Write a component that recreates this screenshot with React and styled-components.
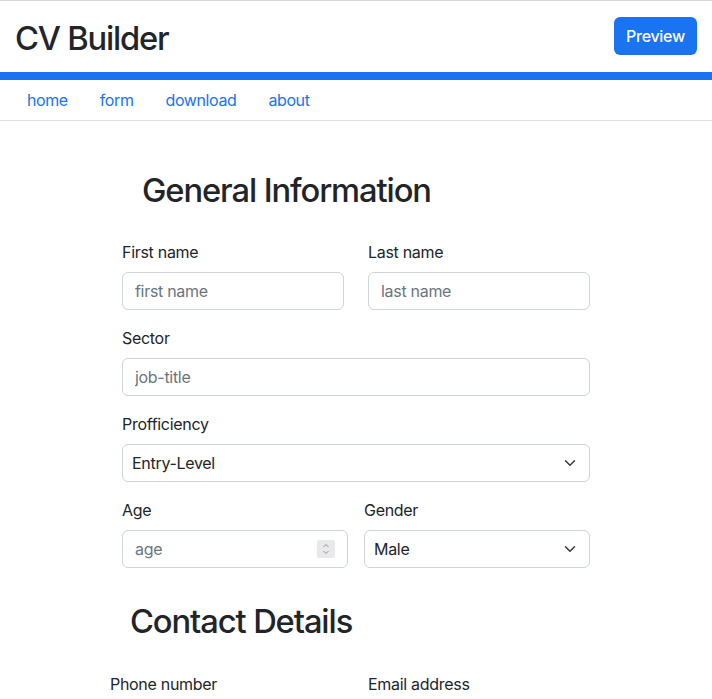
import React from 'react';
import styled, { createGlobalStyle } from 'styled-components';

const GlobalStyle = createGlobalStyle`
  body {
    margin: 0;
    background: #fff;
    color: #212529;
    font-family: Inter, "Noto Sans", sans-serif;
    font-size: 16px;
    line-height: 1.5;
  }
  * { box-sizing: border-box; }
`;

const Chevron = () => (
  <svg width='12' height='12' viewBox='0 0 16 16'>
    <path d='M2 5l6 6 6-6' fill='none' stroke='#343a40' strokeWidth='2' strokeLinecap='round' strokeLinejoin='round' />
  </svg>
);

const App = () => {
  return (
    <>
      <GlobalStyle />
      <Header>
        <Title>CV Builder</Title>
        <PreviewButton>Preview</PreviewButton>
      </Header>
      <Nav>
        <NavLink href='#'>home</NavLink>
        <NavLink href='#'>form</NavLink>
        <NavLink href='#'>download</NavLink>
        <NavLink href='#'>about</NavLink>
      </Nav>

      <FormWrap>
        <SectionTitle $indent={20}>General Information</SectionTitle>
        <Row $gap={24}>
          <Field>
            <Label>First name</Label>
            <Input placeholder='first name' />
          </Field>
          <Field>
            <Label>Last name</Label>
            <Input placeholder='last name' />
          </Field>
        </Row>
        <Field>
          <Label>Sector</Label>
          <Input placeholder='job-title' />
        </Field>
        <Field>
          <Label>Profficiency</Label>
          <SelectBox>
            <Select defaultValue='entry'>
              <option value='entry'>Entry-Level</option>
              <option value='mid'>Mid-Level</option>
              <option value='senior'>Senior</option>
            </Select>
            <Arrow><Chevron /></Arrow>
          </SelectBox>
        </Field>
        <Row $gap={16}>
          <Field>
            <Label>Age</Label>
            <SelectBox>
              <Input placeholder='age' />
              <Spinner>
                <svg width='8' height='14' viewBox='0 0 8 14'>
                  <path d='M1.5 5L4 2.5 6.5 5M1.5 9L4 11.5 6.5 9' fill='none' stroke='#8a8f94' strokeWidth='1' />
                </svg>
              </Spinner>
            </SelectBox>
          </Field>
          <Field>
            <Label>Gender</Label>
            <SelectBox>
              <Select defaultValue='male'>
                <option value='male'>Male</option>
                <option value='female'>Female</option>
              </Select>
              <Arrow><Chevron /></Arrow>
            </SelectBox>
          </Field>
        </Row>

        <SectionTitle $indent={8} $top={18} $bottom={15}>Contact Details</SectionTitle>
        <ContactRow>
          <Label>Phone number</Label>
          <Label>Email address</Label>
        </ContactRow>
      </FormWrap>
    </>
  );
};

const Header = styled.header`
  display: flex;
  align-items: center;
  justify-content: space-between;
  height: 80px;
  padding: 0 15px;
  border-top: 1px solid #d6d6d6;
  border-bottom: 8px solid #1a73f0;
`;

const Title = styled.h1`
  margin: 4px 0 0;
  font-size: 32.7px;
  font-weight: 500;
  line-height: 1.2;
  letter-spacing: -1.2px;
  color: #212529;
`;

const PreviewButton = styled.button`
  height: 38px;
  width: 83px;
  margin: 0 0 2px;
  border: none;
  border-radius: 6px;
  background: #1a73f0;
  color: #fff;
  font-family: inherit;
  font-size: 16px;
  font-weight: 500;
  letter-spacing: -0.3px;
`;

const Nav = styled.nav`
  display: flex;
  padding: 0 11px;
  border-bottom: 1px solid #dee2e6;
`;

const NavLink = styled.a`
  padding: 8px 16px;
  color: #1a73f0;
  text-decoration: none;
  font-size: 16px;
  line-height: 24px;
  letter-spacing: -0.4px;
`;

const FormWrap = styled.main`
  width: 468px;
  margin: 0 auto;
  padding-top: 50px;
  display: flex;
  flex-direction: column;
  gap: 16px;
`;

const SectionTitle = styled.h2`
  margin: ${p => p.$top || 0}px 0 ${p => p.$bottom || 14}px ${p => p.$indent}px;
  font-size: 32.7px;
  font-weight: 500;
  line-height: 1.2;
  letter-spacing: -1.1px;
  color: #212529;
`;

const Row = styled.div`
  display: grid;
  grid-template-columns: 1fr 1fr;
  gap: ${p => p.$gap}px;
`;

const Field = styled.div`
  display: flex;
  flex-direction: column;
`;

const Label = styled.label`
  display: block;
  margin-bottom: 8px;
  font-size: 16px;
  line-height: 24px;
  letter-spacing: -0.3px;
  color: #212529;
`;

const Input = styled.input`
  width: 100%;
  height: 38px;
  padding: 6px 12px;
  border: 1px solid #ced4da;
  border-radius: 6px;
  font-family: inherit;
  font-size: 16px;
  letter-spacing: -0.3px;
  color: #212529;
  background: #fff;

  &::placeholder {
    color: #6c757d;
  }
`;

const SelectBox = styled.div`
  position: relative;
`;

const Select = styled.select`
  width: 100%;
  height: 38px;
  padding: 6px 36px 6px 9px;
  border: 1px solid #ced4da;
  border-radius: 6px;
  appearance: none;
  background: #fff;
  font-family: inherit;
  font-size: 16px;
  letter-spacing: -0.3px;
  color: #212529;
`;

const Arrow = styled.span`
  position: absolute;
  right: 14px;
  top: 13px;
  display: flex;
  pointer-events: none;
`;

const Spinner = styled.span`
  position: absolute;
  right: 13px;
  top: 10px;
  width: 18px;
  height: 18px;
  display: flex;
  align-items: center;
  justify-content: center;
  background: #e9e9ec;
  border-radius: 2px;
`;

const ContactRow = styled.div`
  display: grid;
  grid-template-columns: 258px 1fr;
  margin-left: -12px;
`;

export default App;
